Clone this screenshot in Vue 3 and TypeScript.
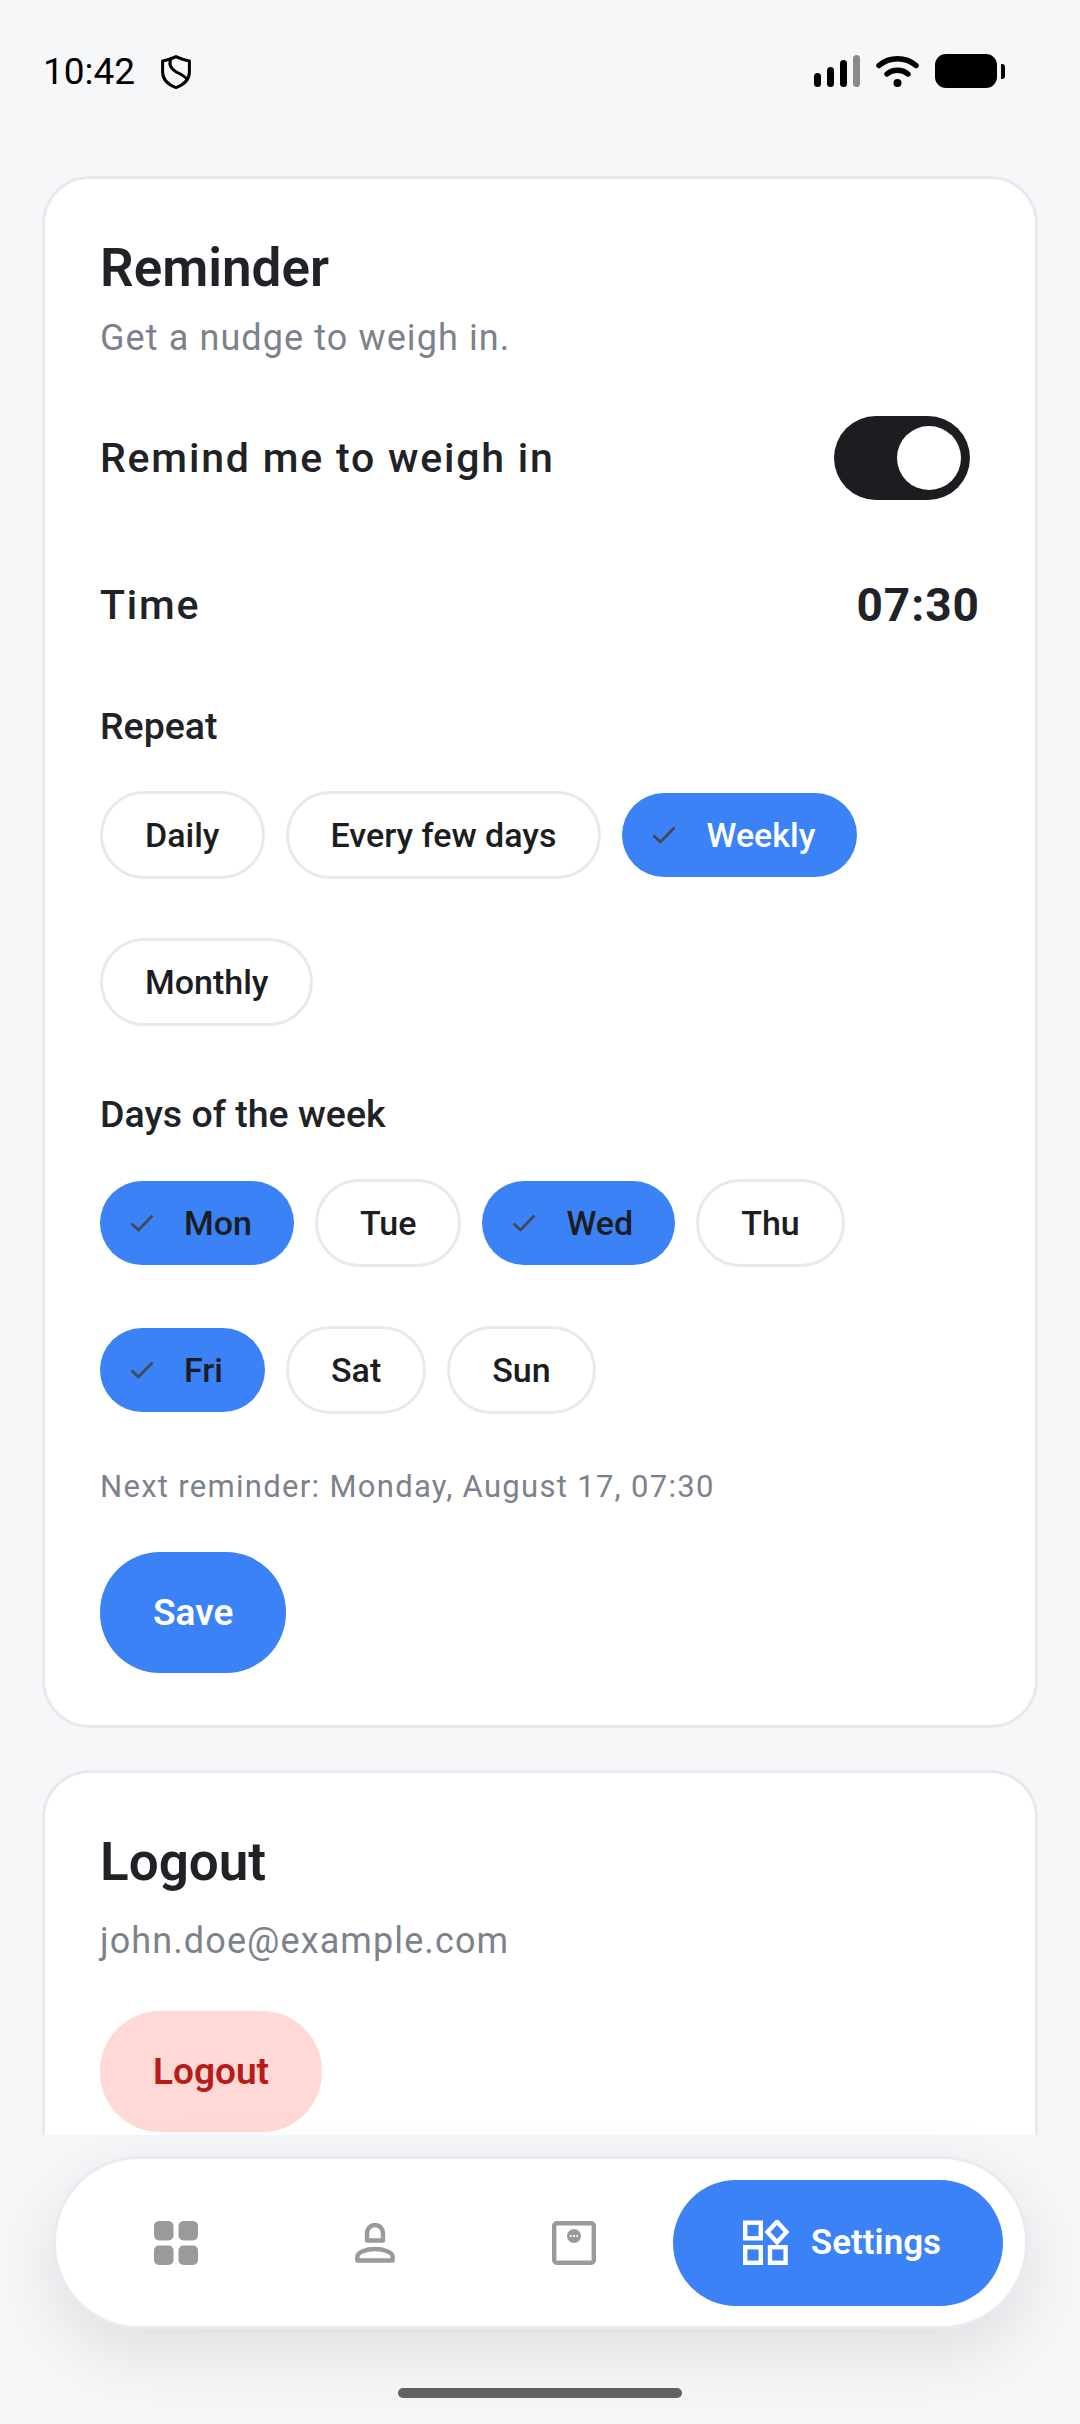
<script setup lang="ts">
interface Chip {
  label: string
  selected?: boolean
}

const repeatOptions: Chip[] = [
  { label: 'Daily' },
  { label: 'Every few days' },
  { label: 'Weekly', selected: true },
  { label: 'Monthly' },
]

const days: Chip[] = [
  { label: 'Mon', selected: true },
  { label: 'Tue' },
  { label: 'Wed', selected: true },
  { label: 'Thu' },
  { label: 'Fri', selected: true },
  { label: 'Sat' },
  { label: 'Sun' },
]
</script>

<template>
  <div class="screen">
    <header class="status-bar">
      <div class="status-left">
        <span class="clock">10:42</span>
        <svg width="30" height="34" viewBox="0 0 30 34" fill="none" stroke="#000" stroke-width="3">
          <path d="M15 1.6 C19 3.6 24 5 28.4 6 V17 C28.4 25 22 30 15 32.6 C8 30 1.6 25 1.6 17 V6 C6 5 11 3.6 15 1.6 Z" stroke-linejoin="round" />
          <path d="M10.5 2.5 C7.5 8 9 13 15 16.7 C19 19 23 20.5 26 24" />
        </svg>
      </div>
      <div class="status-right">
        <div class="signal">
          <span class="bar bar-1"></span>
          <span class="bar bar-2"></span>
          <span class="bar bar-3"></span>
          <span class="bar bar-4"></span>
        </div>
        <svg width="43" height="32" viewBox="0 0 43 32" fill="none" stroke="#000" stroke-width="5.5" stroke-linecap="round">
          <path d="M3 10.5 C13.5 1.5 29.5 1.5 40 10.5" />
          <path d="M11 19 C17 14 26 14 32 19" />
          <circle cx="21.5" cy="28" r="4" fill="#000" stroke="none" />
        </svg>
        <div class="battery">
          <span class="battery-body"></span>
          <span class="battery-nub"></span>
        </div>
      </div>
    </header>

    <main class="content">
      <section class="card">
        <h2 class="card-title">Reminder</h2>
        <p class="card-sub">Get a nudge to weigh in.</p>

        <div class="row toggle-row">
          <span class="row-label">Remind me to weigh in</span>
          <div class="switch"><span class="switch-thumb"></span></div>
        </div>

        <div class="row time-row">
          <span class="row-label">Time</span>
          <span class="time-value">07:30</span>
        </div>

        <h3 class="group-label repeat-label">Repeat</h3>
        <div class="chips">
          <div v-for="chip in repeatOptions" :key="chip.label" class="chip" :class="{ selected: chip.selected, light: chip.selected }">
            <svg v-if="chip.selected" class="check" width="24" height="18" viewBox="0 0 24 18" fill="none" stroke="#44474f" stroke-width="2.6">
              <path d="M1.5 9.5 L8.5 16 L22.5 1.5" />
            </svg>
            {{ chip.label }}
          </div>
        </div>

        <h3 class="group-label days-label">Days of the week</h3>
        <div class="chips">
          <div v-for="day in days" :key="day.label" class="chip" :class="{ selected: day.selected }">
            <svg v-if="day.selected" class="check" width="24" height="18" viewBox="0 0 24 18" fill="none" stroke="#44474f" stroke-width="2.6">
              <path d="M1.5 9.5 L8.5 16 L22.5 1.5" />
            </svg>
            {{ day.label }}
          </div>
        </div>

        <p class="next-reminder">Next reminder: Monday, August 17, 07:30</p>
        <button class="btn btn-save">Save</button>
      </section>

      <section class="card logout-card">
        <h2 class="card-title">Logout</h2>
        <p class="card-sub email">john.doe@example.com</p>
        <button class="btn btn-logout">Logout</button>
      </section>
    </main>

    <nav class="bottom-nav">
      <div class="nav-item">
        <svg width="44" height="44" viewBox="0 0 44 44" fill="#9a9a9c">
          <rect x="0" y="0" width="19.5" height="19.5" rx="5" />
          <rect x="24.5" y="0" width="19.5" height="19.5" rx="5" />
          <rect x="0" y="24.5" width="19.5" height="19.5" rx="5" />
          <rect x="24.5" y="24.5" width="19.5" height="19.5" rx="5" />
        </svg>
      </div>
      <div class="nav-item">
        <svg width="40" height="40" viewBox="0 0 40 40" fill="none" stroke="#9a9a9c" stroke-width="4.4" stroke-linejoin="round">
          <path d="M12 17.5 V10 a8 8 0 0 1 16 0 V17.5 Z" />
          <path d="M2.4 37.5 V33.5 C2.4 29.5 11 26 20 26 S37.6 29.5 37.6 33.5 V37.5 Z" />
        </svg>
      </div>
      <div class="nav-item">
        <svg width="44" height="44" viewBox="0 0 44 44" fill="none">
          <rect x="2.2" y="2.2" width="39.6" height="39.6" rx="2.5" stroke="#9a9a9c" stroke-width="4.4" />
          <circle cx="22" cy="15" r="7" fill="#9a9a9c" />
          <circle cx="18.8" cy="15" r="1.1" fill="#fff" />
          <circle cx="22" cy="15" r="1.1" fill="#fff" />
          <circle cx="25.2" cy="15" r="1.1" fill="#fff" />
        </svg>
      </div>
      <div class="nav-active">
        <svg width="46" height="46" viewBox="0 0 46 46" fill="none" stroke="#fff" stroke-width="4.4">
          <rect x="2.2" y="2.7" width="15.6" height="15.6" />
          <rect x="2.2" y="27.2" width="15.6" height="15.6" />
          <rect x="27" y="27.2" width="15.6" height="15.6" />
          <path d="M34 1.8 L43.5 12 L34 22.2 L24.5 12 Z" stroke-linejoin="miter" />
        </svg>
        <span>Settings</span>
      </div>
    </nav>

    <div class="home-indicator"></div>
  </div>
</template>

<style>
  html,
  body {
    margin: 0;
    background: #f6f7f9;
  }
</style>

<style scoped>
  .screen {
    width: 1080px;
    height: 2424px;
    background: #f6f7f9;
    font-family: Roboto, sans-serif;
    color: #1f2226;
    display: flex;
    flex-direction: column;
    overflow: hidden;
  }

  .status-bar {
    height: 176px;
    flex-shrink: 0;
    box-sizing: border-box;
    padding: 54px 75px 0 43px;
    display: flex;
    justify-content: space-between;
    align-items: flex-start;
  }

  .status-left {
    display: flex;
    align-items: center;
    gap: 26px;
    height: 35px;
  }

  .clock {
    font-size: 37px;
    color: #000;
    line-height: 35px;
  }

  .status-right {
    display: flex;
    align-items: center;
    gap: 16px;
    height: 34px;
  }

  .signal {
    display: flex;
    align-items: flex-end;
    gap: 5.5px;
    height: 32px;
  }

  .bar {
    width: 7.5px;
    border-radius: 4px;
    background: #000;
  }

  .bar-1 {
    height: 14px;
  }

  .bar-2 {
    height: 20px;
  }

  .bar-3 {
    height: 27px;
  }

  .bar-4 {
    height: 32px;
    background: #8a8a8a;
  }

  .battery {
    display: flex;
    align-items: center;
    gap: 4px;
  }

  .battery-body {
    width: 62px;
    height: 34px;
    border-radius: 11px;
    background: #000;
  }

  .battery-nub {
    width: 4px;
    height: 15px;
    border-radius: 0 3px 3px 0;
    background: #000;
  }

  .content {
    height: 1959px;
    flex-shrink: 0;
    overflow: hidden;
    padding: 0 42px;
    box-sizing: border-box;
  }

  .card {
    background: #fff;
    border: 3px solid #e7e9ee;
    border-radius: 48px;
    padding: 59px 55px 52px 55px;
    box-sizing: border-box;
  }

  .logout-card {
    margin-top: 42px;
  }

  .card-title {
    margin: 0;
    font-size: 53px;
    line-height: 60px;
    font-weight: 600;
  }

  .card-sub {
    margin: 18px 0 0;
    font-size: 36px;
    line-height: 44px;
    letter-spacing: 1.1px;
    color: #7c828c;
  }

  .email {
    margin-top: 27px;
  }

  .row {
    display: flex;
    justify-content: space-between;
    align-items: center;
  }

  .toggle-row {
    margin-top: 54px;
    padding-right: 10px;
  }

  .row-label {
    font-size: 41px;
    font-weight: 500;
    letter-spacing: 1.8px;
    line-height: 50px;
  }

  .time-row {
    margin-top: 78px;
  }

  .time-value {
    font-size: 46px;
    font-weight: 700;
    line-height: 50px;
    letter-spacing: 1px;
  }

  .switch {
    width: 136px;
    height: 84px;
    margin: 2px 0;
    border-radius: 42px;
    background: #1c1d21;
    display: flex;
    align-items: center;
    justify-content: flex-end;
    padding-right: 9px;
    box-sizing: border-box;
  }

  .switch-thumb {
    width: 64px;
    height: 64px;
    border-radius: 50%;
    background: #fff;
  }

  .group-label {
    margin: 0;
    font-size: 37.5px;
    font-weight: 500;
    line-height: 44px;
  }

  .repeat-label {
    margin-top: 74px;
  }

  .days-label {
    margin-top: 66px;
  }

  .chips {
    display: flex;
    flex-wrap: wrap;
    align-items: center;
    column-gap: 21px;
    row-gap: 59px;
    margin-top: 43px;
  }

  .chip {
    height: 88px;
    box-sizing: border-box;
    border: 3px solid #e7e9ee;
    border-radius: 44px;
    padding: 0 42px;
    display: flex;
    align-items: center;
    font-size: 34px;
    font-weight: 500;
    color: #1c1d21;
    background: #fff;
  }

  .chip.selected {
    height: 84px;
    margin: 2px 0;
    border: none;
    border-radius: 42px;
    padding: 0 42px 0 30px;
    background: #3b82f6;
  }

  .chip.light {
    color: #fff;
  }

  .check {
    margin-right: 30px;
  }

  .next-reminder {
    margin: 53px 0 0;
    font-size: 31px;
    line-height: 40px;
    letter-spacing: 1.3px;
    color: #7c828c;
  }

  .btn {
    display: block;
    height: 121px;
    border: none;
    border-radius: 60px;
    padding: 0 53px;
    font-family: inherit;
    font-size: 37px;
    font-weight: 600;
  }

  .btn-save {
    margin-top: 45px;
    background: #3b82f6;
    color: #fff;
  }

  .btn-logout {
    margin-top: 48px;
    background: #ffd9d6;
    color: #ba1a1a;
  }

  .bottom-nav {
    margin: 21px 0 0 53px;
    width: 975px;
    height: 173px;
    flex-shrink: 0;
    box-sizing: border-box;
    background: #fff;
    border: 3px solid #e9ebf0;
    border-radius: 86px;
    padding-left: 20px;
    box-shadow: 0 24px 70px rgba(0, 0, 0, 0.1);
    display: flex;
    align-items: center;
  }

  .nav-item {
    width: 199px;
    display: flex;
    justify-content: center;
  }

  .nav-active {
    width: 330px;
    height: 126px;
    box-sizing: border-box;
    padding-left: 8px;
    border-radius: 63px;
    background: #3b82f6;
    color: #fff;
    font-size: 35px;
    font-weight: 600;
    display: flex;
    align-items: center;
    justify-content: center;
    gap: 22px;
  }

  .home-indicator {
    width: 284px;
    height: 10px;
    border-radius: 5px;
    background: #616161;
    margin: 59px auto 0;
    flex-shrink: 0;
  }
</style>
